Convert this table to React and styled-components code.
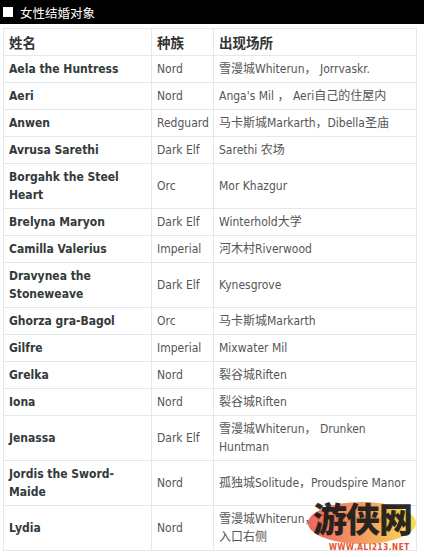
import React from "react";
import styled, { createGlobalStyle } from "styled-components";

const Global = createGlobalStyle`
  html, body { margin: 0; padding: 0; background: #fff; }
  body { width: 424px; height: 557px; overflow: hidden; }
`;

const Page = styled.div`
  position: relative;
  width: 424px;
  height: 557px;
  overflow: hidden;
  background: #fff;
  font-family: "DejaVu Sans Condensed", "DejaVu Sans", "Noto Sans CJK SC", sans-serif;
  font-stretch: condensed;
`;

const TitleBar = styled.div`
  height: 24px;
  background: #000;
  display: flex;
  align-items: center;
  gap: 7px;
  padding-left: 3px;
  color: #fff;
  font-family: "Noto Sans CJK SC", sans-serif;
  font-size: 12.5px;
  margin-bottom: 4px;
`;

const Square = styled.span`
  width: 10px;
  height: 10px;
  background: #fff;
  flex: none;
`;

const Table = styled.table`
  margin-left: 3px;
  width: 414px;
  border-collapse: collapse;
  table-layout: fixed;
  border: 1px solid #dfe5ea;
`;

const Cell = styled.td`
  border: 1px solid #e3e8ec;
  padding: 4px 4px 4px 5px;
  line-height: 18px;
  font-size: 12px;
  vertical-align: middle;
  color: ${(p) => (p.$bold ? "#323a3a" : "#555")};
  font-weight: ${(p) => (p.$bold ? 700 : 400)};
  font-family: "DejaVu Sans Condensed", "DejaVu Sans", "Noto Sans CJK SC", sans-serif;
  word-wrap: break-word;
`;

const HeadCell = styled.th`
  border: 1px solid #e3e8ec;
  padding: 4px 4px 4px 5px;
  line-height: 18px;
  text-align: left;
  font-size: 13.5px;
  font-weight: 700;
  color: #333;
  font-family: "Noto Sans CJK SC", sans-serif;
`;

const Watermark = styled.div`
  position: absolute;
  left: 305px;
  top: 495px;
  width: 118px;
  height: 62px;
  pointer-events: none;
`;

const LogoText = styled.div`
  position: absolute;
  left: 8px;
  top: 0px;
  font-family: "Noto Sans CJK SC", sans-serif;
  font-weight: 900;
  font-size: 34px;
  letter-spacing: -1px;
  line-height: 46px;
  color: #1a1a1a;
  opacity: 0.92;
`;

const LogoUrl = styled.div`
  position: absolute;
  left: 24px;
  top: 48px;
  font-family: "DejaVu Sans", sans-serif;
  font-weight: 700;
  font-size: 8px;
  letter-spacing: 0.6px;
  color: #e8502a;
  text-shadow: 0 0 1px #fff;
`;

const rows = [
  ["Aela the Huntress", "Nord", "雪漫城Whiterun， Jorrvaskr."],
  ["Aeri", "Nord", "Anga's Mil  ， Aeri自己的住屋内"],
  ["Anwen", "Redguard", "马卡斯城Markarth，Dibella圣庙"],
  ["Avrusa Sarethi", "Dark Elf", "Sarethi 农场"],
  ["Borgahk the Steel Heart", "Orc", "Mor Khazgur"],
  ["Brelyna Maryon", "Dark Elf", "Winterhold大学"],
  ["Camilla Valerius", "Imperial", "河木村Riverwood"],
  ["Dravynea the Stoneweave", "Dark Elf", "Kynesgrove"],
  ["Ghorza gra-Bagol", "Orc", "马卡斯城Markarth"],
  ["Gilfre", "Imperial", "Mixwater Mil"],
  ["Grelka", "Nord", "裂谷城Riften"],
  ["Iona", "Nord", "裂谷城Riften"],
  ["Jenassa", "Dark Elf", "雪漫城Whiterun， Drunken Huntman"],
  ["Jordis the Sword-Maide", "Nord", "孤独城Solitude，Proudspire Manor"],
  ["Lydia", "Nord", "雪漫城Whiterun，Dragonsreach内入口右侧"],
];

export default function App() {
  return (
    <Page>
      <Global />
      <TitleBar>
        <Square />
        <span>女性结婚对象</span>
      </TitleBar>
      <Table>
        <colgroup>
          <col style={{ width: 148 }} />
          <col style={{ width: 62 }} />
          <col />
        </colgroup>
        <thead>
          <tr>
            <HeadCell>姓名</HeadCell>
            <HeadCell>种族</HeadCell>
            <HeadCell>出现场所</HeadCell>
          </tr>
        </thead>
        <tbody>
          {rows.map(([n, r, l]) => (
            <tr key={n}>
              <Cell $bold>{n}</Cell>
              <Cell>{r}</Cell>
              <Cell>{l}</Cell>
            </tr>
          ))}
        </tbody>
      </Table>
      <Watermark>
        <svg width="118" height="62" viewBox="0 0 118 62" style={{ position: "absolute", left: 0, top: 0 }}>
          <defs>
            <linearGradient id="wg" x1="0" y1="0" x2="1" y2="0">
              <stop offset="0" stopColor="#e8413a" />
              <stop offset="0.55" stopColor="#f08a3a" />
              <stop offset="1" stopColor="#f6d628" />
            </linearGradient>
          </defs>
          <ellipse cx="57" cy="28" rx="54" ry="21" fill="url(#wg)" opacity="0.8" />
        </svg>
        <LogoText>游侠网</LogoText>
        <LogoUrl>WWW.ALI213.NET</LogoUrl>
      </Watermark>
    </Page>
  );
}
